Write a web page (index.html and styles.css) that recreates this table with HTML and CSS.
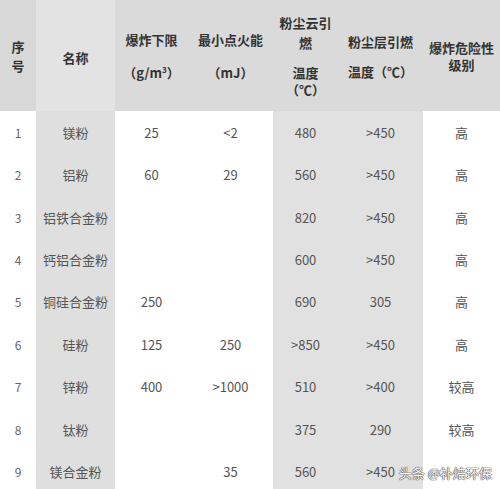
FILE: index.html
```html
<!DOCTYPE html>
<html lang="zh">
<head>
<meta charset="utf-8">
<link rel="stylesheet" href="styles.css">
</head>
<body>
<div class="wrap">
<table class="tbl">
  <colgroup>
    <col class="c1"><col class="c2"><col class="c3"><col class="c4"><col class="c5"><col class="c6"><col class="c7">
  </colgroup>
  <thead>
    <tr>
      <th class="h-no"><p class="l19">序<br>号</p></th>
      <th class="h-name">名称</th>
      <th><p class="l33">爆炸下限<br>（g/m<sup>3</sup>）</p></th>
      <th><p class="l33">最小点火能<br>（mJ）</p></th>
      <th><p class="l20">粉尘云引<br>燃</p><p class="l17 gap">温度<br>（℃）</p></th>
      <th><p class="l30">粉尘层引燃<br>温度（℃）</p></th>
      <th><p class="l17">爆炸危险性<br>级别</p></th>
    </tr>
  </thead>
  <tbody>
    <tr><td>1</td><td class="g2">镁粉</td><td>25</td><td>&lt;2</td><td class="g">480</td><td class="g">&gt;450</td><td>高</td></tr>
    <tr><td>2</td><td class="g2">铝粉</td><td>60</td><td>29</td><td class="g">560</td><td class="g">&gt;450</td><td>高</td></tr>
    <tr><td>3</td><td class="g2">铝铁合金粉</td><td></td><td></td><td class="g">820</td><td class="g">&gt;450</td><td>高</td></tr>
    <tr><td>4</td><td class="g2">钙铝合金粉</td><td></td><td></td><td class="g">600</td><td class="g">&gt;450</td><td>高</td></tr>
    <tr><td>5</td><td class="g2">铜硅合金粉</td><td>250</td><td></td><td class="g">690</td><td class="g">305</td><td>高</td></tr>
    <tr><td>6</td><td class="g2">硅粉</td><td>125</td><td>250</td><td class="g">&gt;850</td><td class="g">&gt;450</td><td>高</td></tr>
    <tr><td>7</td><td class="g2">锌粉</td><td>400</td><td>&gt;1000</td><td class="g">510</td><td class="g">&gt;400</td><td>较高</td></tr>
    <tr><td>8</td><td class="g2">钛粉</td><td></td><td></td><td class="g">375</td><td class="g">290</td><td>较高</td></tr>
    <tr><td>9</td><td class="g2">镁合金粉</td><td></td><td>35</td><td class="g">560</td><td class="g">&gt;450</td><td></td></tr>
  </tbody>
</table>
<div class="mark">头条 @补焙环保</div>
</div>
</body>
</html>
```

FILE: styles.css
```css
html, body {
  margin: 0;
  padding: 0;
  background: #fff;
}
.wrap {
  position: relative;
  width: 500px;
  height: 489px;
  overflow: hidden;
}
.tbl {
  width: 500px;
  border-collapse: collapse;
  table-layout: fixed;
  font-family: "Noto Sans CJK SC", "Noto Sans", sans-serif;
}
.c1 { width: 36px; }
.c2 { width: 79px; }
.c3 { width: 73px; }
.c4 { width: 85px; }
.c5 { width: 65px; }
.c6 { width: 85px; }
.c7 { width: 77px; }
thead th {
  height: 107px;
  padding: 0;
  background: #dadada;
  color: #333;
  font-size: 13px;
  font-weight: 700;
  text-align: center;
  vertical-align: middle;
  white-space: nowrap;
}
thead th.h-no { background: #d8d8d8; }
thead th.h-name { background: #e3e3e3; padding-top: 4px; }
th p { margin: 0; }
.l19 { line-height: 19px; }
.l20 { line-height: 20px; }
.l17 { line-height: 17px; }
.l30 { line-height: 30px; padding-top: 3px; }
.l33 { line-height: 33px; }
.gap { margin-top: 11px; }
sup {
  font-size: 8px;
  line-height: 0;
  vertical-align: 5px;
}
tbody td {
  height: 42.44px;
  padding: 0;
  text-align: center;
  vertical-align: middle;
  color: #555;
  font-size: 13px;
  white-space: nowrap;
}
tbody td:first-child { font-size: 12px; color: #666; }
td.g2 { background: #dfdfdf; }
td.g { background: #e1e1e1; }
.mark {
  position: absolute;
  right: 8px;
  bottom: 7px;
  font-family: "Noto Sans CJK SC", sans-serif;
  font-size: 13px;
  color: #fafafa;
  text-shadow: 0 0 1px #444, 0 0 1px #444, 0 0 1px #444;
}
```
